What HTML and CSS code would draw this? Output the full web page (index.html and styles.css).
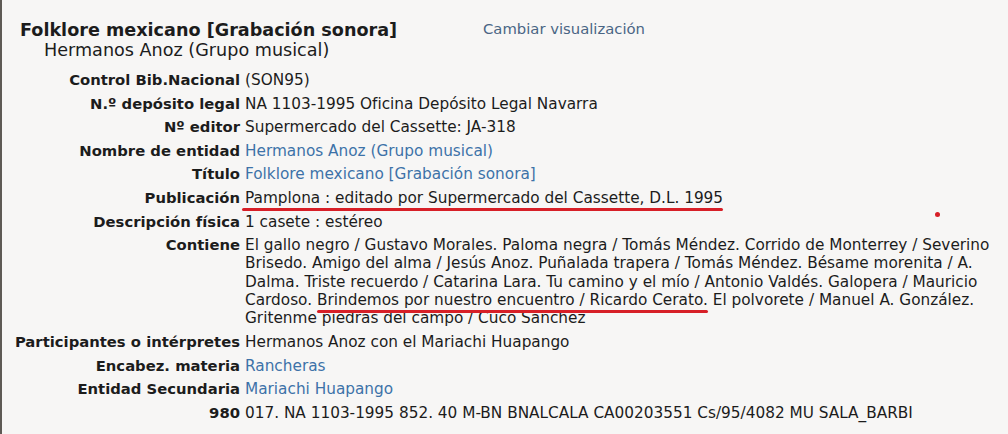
FILE: index.html
```html
<!DOCTYPE html>
<html lang="es">
<head>
<meta charset="utf-8">
<link rel="stylesheet" href="styles.css">
</head>
<body>
<div class="page">
  <div class="head">
    <div class="titles">
      <div class="title">Folklore mexicano [Grabación sonora]</div>
      <div class="subtitle">Hermanos Anoz (Grupo musical)</div>
    </div>
    <a class="switch">Cambiar visualización</a>
  </div>
  <div class="record">
    <div class="lbl">Control Bib.Nacional</div><div class="val">(SON95)</div>
    <div class="lbl">N.º depósito legal</div><div class="val">NA 1103-1995 Oficina Depósito Legal Navarra</div>
    <div class="lbl">Nº editor</div><div class="val">Supermercado del Cassette: JA-318</div>
    <div class="lbl">Nombre de entidad</div><div class="val"><a class="link">Hermanos Anoz (Grupo musical)</a></div>
    <div class="lbl">Título</div><div class="val"><a class="link">Folklore mexicano [Grabación sonora]</a></div>
    <div class="lbl">Publicación</div><div class="val"><span class="mark mark-pub">Pamplona : editado por Supermercado del Cassette, D.L. 1995</span><span class="dot"></span></div>
    <div class="lbl">Descripción física</div><div class="val">1 casete : estéreo</div>
    <div class="lbl">Contiene</div><div class="val wrap">El gallo negro / Gustavo Morales. Paloma negra / Tomás Méndez. Corrido de Monterrey / Severino Brisedo. Amigo del alma / Jesús Anoz. Puñalada trapera / Tomás Méndez. Bésame morenita / A. Dalma. Triste recuerdo / Catarina Lara. Tu camino y el mío / Antonio Valdés. Galopera / Mauricio Cardoso. <span class="mark mark-song">Brindemos por nuestro encuentro / Ricardo Cerato.</span> El polvorete / Manuel A. González. Gritenme piedras del campo / Cuco Sánchez</div>
    <div class="lbl">Participantes o intérpretes</div><div class="val">Hermanos Anoz con el Mariachi Huapango</div>
    <div class="lbl">Encabez. materia</div><div class="val"><a class="link">Rancheras</a></div>
    <div class="lbl">Entidad Secundaria</div><div class="val"><a class="link">Mariachi Huapango</a></div>
    <div class="lbl">980</div><div class="val">017. NA 1103-1995 852. 40 M-BN BNALCALA CA00203551 Cs/95/4082 MU SALA_BARBI</div>
  </div>
</div>
</body>
</html>
```

FILE: styles.css
```css
html, body {
  margin: 0;
  padding: 0;
  background: #f7f6f5;
}
body {
  font-family: "DejaVu Sans", Verdana, sans-serif;
  color: #1c1c1c;
  width: 1008px;
  height: 434px;
  overflow: hidden;
}
.page {
  border-left: 2px solid #5e5a55;
  height: 434px;
  box-sizing: border-box;
  padding-top: 20px;
}
.head {
  display: flex;
  align-items: flex-start;
}
.titles {
  padding-left: 18px;
  width: 463px;
}
.title {
  font-weight: bold;
  font-size: 17.6px;
  line-height: 20px;
}
.subtitle {
  font-size: 17.6px;
  line-height: 20px;
  padding-left: 24px;
}
.switch {
  font-size: 14.8px;
  line-height: 18px;
  color: #4a6584;
}
.record {
  display: grid;
  grid-template-columns: 238px 1fr;
  column-gap: 5px;
  row-gap: 5.3px;
  margin-top: 11px;
  font-size: 15px;
  line-height: 18.3px;
}
.lbl {
  font-weight: bold;
  font-size: 14.8px;
  text-align: right;
  white-space: nowrap;
}
.val {
  font-size: 15.3px;
  padding-right: 6px;
  position: relative;
}
.link {
  color: #3d72a8;
}
.mark {
  position: relative;
}
.mark::after {
  content: "";
  position: absolute;
  left: 0;
  right: 0;
  bottom: -4px;
  height: 3px;
  border-radius: 2px;
  background: #d71f27;
}
.mark-pub::after {
  left: -3px;
}
.dot {
  position: absolute;
  left: 690px;
  top: 23px;
  width: 5px;
  height: 5px;
  border-radius: 50%;
  background: #d71f27;
}
```
